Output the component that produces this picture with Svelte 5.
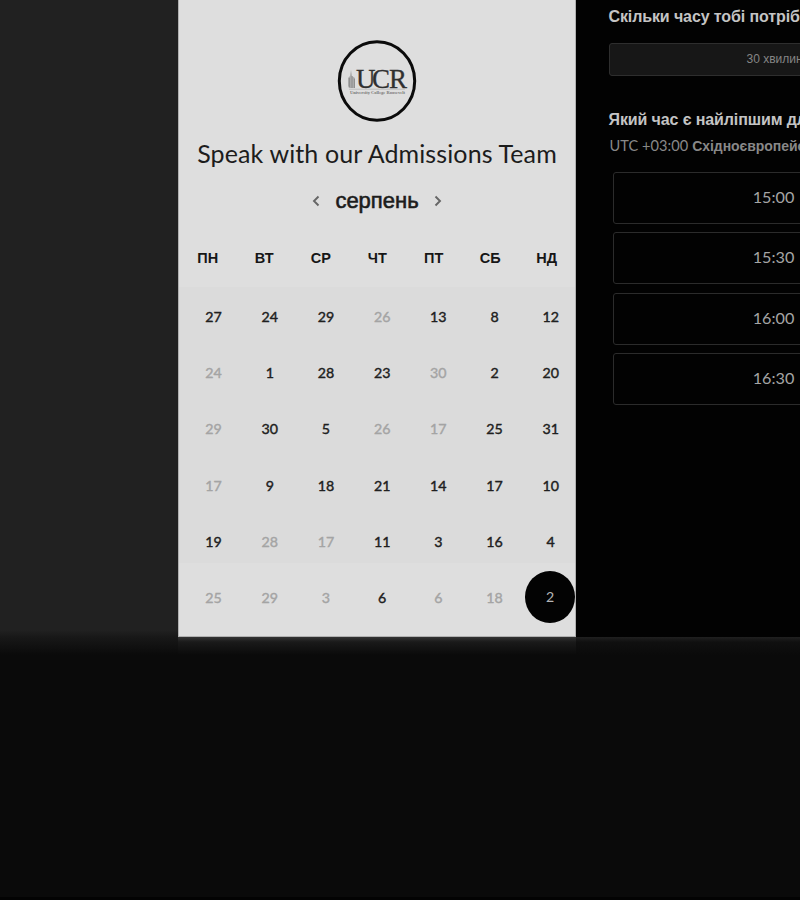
<script>
  const weekdays = ['ПН', 'ВТ', 'СР', 'ЧТ', 'ПТ', 'СБ', 'НД'];
  // Negative numbers mark unavailable days.
  const weeks = [
    [27, 24, 29, -26, 13, 8, 12],
    [-24, 1, 28, 23, -30, 2, 20],
    [-29, 30, 5, -26, -17, 25, 31],
    [-17, 9, 18, 21, 14, 17, 10],
    [19, -28, -17, 11, 3, 16, 4],
    [-25, -29, -3, 6, -6, -18, 2]
  ];
  const slots = ['15:00', '15:30', '16:00', '16:30'];
</script>

<div class="page">
  <main>
    <section class="card">
      <svg class="logo" width="80" height="82" viewBox="0 0 80 82">
        <ellipse cx="40" cy="41" rx="37.7" ry="39.2" fill="none" stroke="#0b0b0b" stroke-width="3" />
        <path d="M11 46V38l2-2 1-6 1 6 3 2v10h-6z" fill="#aaa" />
        <path d="M12.5 38v9M15 36v12M17.5 39v9" stroke="#888" stroke-width=".8" />
        <text x="19" y="47.5" dx="0 -3.6 -0.8" font-size="27" fill="#303030" stroke="#303030" stroke-width=".3">UCR</text>
        <path d="M12 49.2H68" stroke="#aaa" stroke-width=".6" />
        <text x="13" y="53.6" textLength="55" lengthAdjust="spacingAndGlyphs" font-size="4.6" font-weight="700" fill="#777">University College Roosevelt</text>
      </svg>
      <h1>Speak with our Admissions Team</h1>
      <div class="month">
        <svg width="8" height="12" viewBox="0 0 8 12"><path d="M6.5 1.5 2 6l4.5 4.5" /></svg>
        <span>серпень</span>
        <svg width="8" height="12" viewBox="0 0 8 12"><path d="M1.5 1.5 6 6l-4.5 4.5" /></svg>
      </div>
      <div class="weekdays">
        {#each weekdays as day}<span>{day}</span>{/each}
      </div>
      <div class="days">
        {#each weeks as week, r}
          <div class="week">
            {#each week as day, c}
              <span class:off={day < 0} class:selected={r === 5 && c === 6}>{Math.abs(day)}</span>
            {/each}
          </div>
        {/each}
      </div>
    </section>
    <section class="times">
      <h2>Скільки часу тобі потрібно?</h2>
      <div class="duration">30 хвилин</div>
      <h2>Який час є найліпшим для тебе?</h2>
      <p><span>UTC +03:00</span> Східноєвропейський час</p>
      <div class="slots">
        {#each slots as slot}<div class="slot">{slot}</div>{/each}
      </div>
    </section>
  </main>
  <div class="shade"><i></i><i></i><i></i></div>
</div>

<style>
  :global(body) { background: #0a0a0a; }
  .page {
    height: 900px;
    width: 800px;
    box-sizing: border-box;
    overflow: hidden;
    background: #0a0a0a;
    border-bottom: 3px solid #030303;
    font-family: Lato, "Liberation Sans", sans-serif;
  }
  main {
    display: flex;
    height: 637px;
    padding-left: 178px;
    background: linear-gradient(#212121 630px, #181818 637px);
  }
  .shade { display: grid; grid-template-columns: 178px 398px 1fr; height: 18px; }
  .shade i { background: linear-gradient(#181818, #0a0a0a); }
  .shade i:nth-child(2) { background: linear-gradient(#333, #1a1a1a 5px, #0a0a0a); }
  .shade i:nth-child(3) { background: linear-gradient(#202020, #101010 5px, #0a0a0a); }
  .card {
    width: 398px;
    flex: none;
    box-sizing: border-box;
    border: solid #b0b0b0;
    border-width: 0 1px 1px;
    background: #dedede;
    display: flex;
    flex-direction: column;
    align-items: center;
  }
  .logo { margin-top: 40px; flex: none; font-family: "Liberation Serif", serif; }
  h1 {
    margin: 15px 0 0;
    height: 32px;
    line-height: 32px;
    font-size: 25px;
    font-weight: 400;
    color: #1c1c1c;
    white-space: nowrap;
    letter-spacing: 0.12px;
  }
  .month {
    display: flex;
    align-items: center;
    gap: 15px;
    margin-top: 17px;
    height: 30px;
  }
  .month span {
    font: 22px/32px "Liberation Sans", sans-serif;
    color: #1c1c1c;
    -webkit-text-stroke: 0.6px #1c1c1c;
  }
  .month svg { fill: none; stroke: #666; stroke-width: 1.9; }
  .weekdays {
    align-self: stretch;
    margin: 30px 0 0 0.5px;
    height: 24px;
    display: grid;
    grid-template-columns: repeat(7, 56.5px);
    font: 700 14.5px/25px "Liberation Sans", sans-serif;
    color: #161616;
    text-align: center;
  }
  .days {
    align-self: stretch;
    margin-top: 17px;
    padding-left: 6.5px;
    background: linear-gradient(#dbdbdb 276px, #dedede 276px);
  }
  .week {
    display: grid;
    grid-template-columns: repeat(7, 56.2px);
    height: 56.2px;
  }
  .week span {
    text-align: center;
    line-height: 60px;
    font-size: 14.2px;
    color: #202020;
    -webkit-text-stroke: 0.4px currentColor;
  }
  .week .off { color: #a4a4a4; }
  .week .selected {
    width: 50px;
    height: 52px;
    margin: 3px 0 0 2.5px;
    border-radius: 50%;
    background: #030303;
    color: #b5b5b5;
    line-height: 51px;
    -webkit-text-stroke: 0;
  }
  .times {
    flex: 1;
    min-width: 0;
    overflow: hidden;
    background: #020202;
    padding-left: 32.5px;
    white-space: nowrap;
  }
  h2 {
    margin: 0;
    font: 700 16px/34px "Liberation Sans", sans-serif;
    letter-spacing: -0.11px;
    color: #c4c4c4;
  }
  .duration {
    width: 330px;
    height: 31px;
    margin: 9px 0 27px;
    border: 1px solid #2e2e2e;
    border-radius: 3px;
    background: #171717;
    color: #858585;
    font: 12px/31px "Liberation Sans", sans-serif;
    text-align: center;
  }
  p {
    margin: -2px 0 0 1px;
    font: 700 14px/22px "Liberation Sans", sans-serif;
    letter-spacing: -0.05px;
    color: #888;
  }
  p span { font: 14.6px/22px Lato, sans-serif; letter-spacing: 0.05px; }
  .slots {
    margin: 15px 0 0 4px;
    display: flex;
    flex-direction: column;
    gap: 8.3px;
  }
  .slot {
    width: 320px;
    height: 50px;
    border: 1px solid #2b2b2b;
    border-radius: 3px;
    line-height: 48px;
    text-align: center;
    font-size: 16.2px;
    color: #a5a5a5;
  }
</style>
